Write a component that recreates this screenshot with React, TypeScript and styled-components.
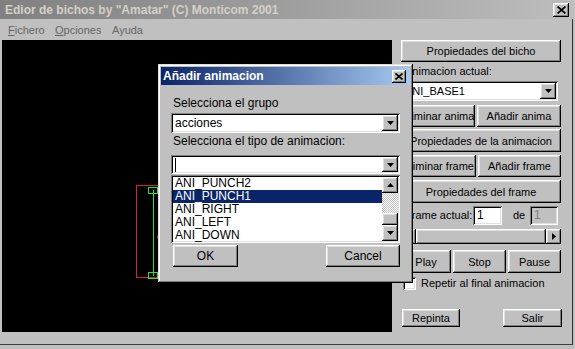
import styled, { createGlobalStyle } from "styled-components";

const GlobalStyle = createGlobalStyle`
  html, body {
    margin: 0;
    padding: 0;
    background: #c0c0c0;
  }
  body {
    width: 575px;
    height: 349px;
    overflow: hidden;
    font-family: "Liberation Sans", Arial, sans-serif;
    font-size: 11px;
    color: #000;
  }
`;

const raised = `
  box-shadow: inset -1px -1px #000, inset 1px 1px #fff,
    inset -2px -2px #808080, inset 2px 2px #dfdfdf;
`;

const sunken = `
  box-shadow: inset 1px 1px #808080, inset -1px -1px #fff,
    inset 2px 2px #000, inset -2px -2px #dfdfdf;
`;

const Screen = styled.div`
  position: relative;
  width: 575px;
  height: 349px;
  background: #c0c0c0;
  overflow: hidden;
`;

const Window = styled.div`
  width: 573px;
  display: flex;
  flex-direction: column;
`;

const TitleBar = styled.div<{ $active?: boolean }>`
  height: ${(p) => (p.$active ? 18 : 19)}px;
  display: flex;
  align-items: center;
  justify-content: space-between;
  padding: 0 4px 0 ${(p) => (p.$active ? 2 : 5)}px;
  background: ${(p) =>
    p.$active
      ? "linear-gradient(to right, #0a246a, #a6caf0)"
      : "linear-gradient(to right, #808080, #bdbdbd)"};
  color: ${(p) => (p.$active ? "#fff" : "#d4d0c8")};
  font-weight: bold;
  font-size: 12px;
  white-space: nowrap;
`;

const CloseBtn = styled.div<{ $w: number; $h: number }>`
  width: ${(p) => p.$w}px;
  height: ${(p) => p.$h}px;
  background: #c0c0c0;
  ${raised}
  display: flex;
  align-items: center;
  justify-content: center;
`;

const Frame = styled.div`
  border-right: 1px solid #303030;
  border-bottom: 1px solid #404040;
`;

const MenuBar = styled.div`
  height: 21px;
  display: flex;
  align-items: center;
  padding-left: 8px;
  color: #666;
`;

const MenuItem = styled.span<{ $w: number }>`
  width: ${(p) => p.$w}px;
  u {
    text-decoration: underline;
  }
`;

const Body = styled.div`
  display: flex;
  height: 292px;
`;

const Canvas = styled.div`
  margin-left: 2px;
  width: 390px;
  height: 292px;
  background: #000;
`;

const Panel = styled.div`
  width: 170px;
  padding-left: 9px;
  display: flex;
  flex-direction: column;
`;

const Footer = styled.div`
  height: 12px;
`;

const Button = styled.div<{ $w?: number; $h?: number; $mt?: number }>`
  width: ${(p) => (p.$w ? `${p.$w}px` : "auto")};
  height: ${(p) => p.$h ?? 22}px;
  margin-top: ${(p) => p.$mt ?? 0}px;
  background: #c0c0c0;
  ${raised}
  display: flex;
  align-items: center;
  justify-content: center;
  white-space: nowrap;
  overflow: hidden;
  flex-shrink: 0;
`;

const Row = styled.div<{ $mt: number; $h: number; $gap?: number }>`
  margin-top: ${(p) => p.$mt}px;
  height: ${(p) => p.$h}px;
  display: flex;
  align-items: center;
  gap: ${(p) => p.$gap ?? 2}px;
  flex-shrink: 0;
`;

const Label = styled.div<{ $h: number; $pl?: number; $mt?: number; $w?: number }>`
  height: ${(p) => p.$h}px;
  line-height: ${(p) => p.$h}px;
  padding-left: ${(p) => p.$pl ?? 0}px;
  margin-top: ${(p) => p.$mt ?? 0}px;
  ${(p) => (p.$w ? `width: ${p.$w}px;` : "")}
  white-space: nowrap;
  flex-shrink: 0;
`;

const Combo = styled.div<{ $w: number; $h: number; $mt?: number }>`
  width: ${(p) => p.$w}px;
  height: ${(p) => p.$h}px;
  margin-top: ${(p) => p.$mt ?? 0}px;
  background: #fff;
  ${sunken}
  display: flex;
  align-items: center;
  padding: 2px;
  box-sizing: border-box;
  flex-shrink: 0;
`;

const ComboText = styled.span`
  flex: 1;
  padding-left: 2px;
  white-space: nowrap;
`;

const Caret = styled.span`
  width: 1px;
  height: 14px;
  margin-left: 2px;
  background: #000;
`;

const ArrowBtn = styled.div<{ $w?: number; $h?: number }>`
  width: ${(p) => p.$w ?? 16}px;
  height: ${(p) => p.$h ?? 16}px;
  background: #c0c0c0;
  ${raised}
  display: flex;
  align-items: center;
  justify-content: center;
  flex-shrink: 0;
`;

const Field = styled.div<{ $w: number; $disabled?: boolean }>`
  width: ${(p) => p.$w}px;
  height: 19px;
  box-sizing: border-box;
  padding: 3px 4px;
  background: ${(p) => (p.$disabled ? "#c0c0c0" : "#fff")};
  color: ${(p) => (p.$disabled ? "#808080" : "#000")};
  ${sunken}
  font-size: 12px;
  line-height: 13px;
`;

const HScroll = styled.div`
  margin-top: 4px;
  width: 160px;
  height: 15px;
  display: flex;
  flex-shrink: 0;
`;

const Thumb = styled.div`
  flex: 1;
  background: #c0c0c0;
  ${raised}
`;

const CheckRow = styled.div`
  margin-top: 3px;
  height: 14px;
  display: flex;
  align-items: center;
  gap: 5px;
  padding-left: 2px;
`;

const CheckBox = styled.div`
  width: 13px;
  height: 13px;
  background: #fff;
  ${sunken}
`;

const BottomRow = styled.div`
  margin-top: 19px;
  width: 160px;
  height: 18px;
  display: flex;
  justify-content: space-between;
  padding-left: 1px;
`;

/* dialog */
const Dialog = styled.div`
  position: absolute;
  left: 158px;
  top: 64px;
  width: 255px;
  height: 219px;
  box-sizing: border-box;
  padding: 3px;
  background: #c0c0c0;
  box-shadow: inset -1px -1px #000, inset 1px 1px #dfdfdf,
    inset -2px -2px #808080, inset 2px 2px #fff;
  display: flex;
  flex-direction: column;
`;

const DialogBody = styled.div`
  padding: 0 10px;
  display: flex;
  flex-direction: column;
  font-size: 12px;
`;

const ListBox = styled.div`
  margin-top: 1px;
  height: 68px;
  box-sizing: border-box;
  padding: 2px;
  background: #fff;
  ${sunken}
  display: flex;
`;

const ListItems = styled.div`
  flex: 1;
  display: flex;
  flex-direction: column;
`;

const ListItem = styled.div<{ $sel?: boolean }>`
  height: 13px;
  line-height: 13px;
  padding-left: 2px;
  margin-right: -1px;
  background: ${(p) => (p.$sel ? "#0a246a" : "transparent")};
  color: ${(p) => (p.$sel ? "#fff" : "#000")};
  font-size: 12px;
`;

const VScroll = styled.div`
  width: 16px;
  display: flex;
  flex-direction: column;
`;

const Track = styled.div<{ $h: number }>`
  height: ${(p) => p.$h}px;
  background-image: repeating-conic-gradient(#c0c0c0 0 25%, #fff 0 50%);
  background-size: 2px 2px;
`;

const VThumb = styled.div`
  flex: 1;
  background: #c0c0c0;
  ${raised}
`;

const DialogButtons = styled.div`
  margin-top: 2px;
  height: 22px;
  display: flex;
  justify-content: space-between;
  padding-left: 2px;
`;

type Dir = "down" | "up" | "right" | "left";

const Tri = ({ dir }: { dir: Dir }) => {
  const horiz = dir === "right" || dir === "left";
  const w = horiz ? 4 : 7;
  const h = horiz ? 7 : 4;
  const pts = {
    down: "0,0 7,0 3.5,4",
    up: "0,4 7,4 3.5,0",
    right: "0,0 0,7 4,3.5",
    left: "4,0 4,7 0,3.5",
  }[dir];
  return (
    <svg width={w} height={h} viewBox={`0 0 ${w} ${h}`}>
      <polygon points={pts} fill="#000" />
    </svg>
  );
};

const XIcon = ({ s }: { s: number }) => (
  <svg width={s} height={s - 1} viewBox="0 0 8 7">
    <path d="M0.5 0.5 L7.5 6.5 M7.5 0.5 L0.5 6.5" stroke="#000" strokeWidth="1.6" />
  </svg>
);

// sprite bounding boxes drawn on the black editor area
const CanvasDrawing = () => (
  <svg width="390" height="292" viewBox="0 0 390 292">
    <rect x="134.5" y="145.5" width="40" height="92" fill="none" stroke="#d02828" strokeWidth="1" />
    <line x1="151.5" y1="150" x2="151.5" y2="236" stroke="#30e030" strokeWidth="1" />
    <rect x="146.5" y="147.5" width="9" height="6" fill="none" stroke="#30e030" />
    <rect x="146.5" y="232.5" width="9" height="6" fill="none" stroke="#30e030" />
    <line x1="156" y1="150.5" x2="162" y2="150.5" stroke="#30e030" />
    <line x1="156" y1="235.5" x2="162" y2="235.5" stroke="#30e030" />
    <ellipse cx="157" cy="197" rx="1.5" ry="3" fill="#777" />
  </svg>
);

export default function App() {
  return (
    <Screen>
      <GlobalStyle />
      <Window>
        <TitleBar>
          <span>Edior de bichos by "Amatar" (C) Monticom 2001</span>
          <CloseBtn $w={16} $h={14}>
            <XIcon s={9} />
          </CloseBtn>
        </TitleBar>
        <Frame>
          <MenuBar>
            <MenuItem $w={47}>
              <u>F</u>ichero
            </MenuItem>
            <MenuItem $w={57}>
              <u>O</u>pciones
            </MenuItem>
            <MenuItem $w={40}>Ayuda</MenuItem>
          </MenuBar>
          <Body>
            <Canvas>
              <CanvasDrawing />
            </Canvas>
            <Panel>
              <Button $w={160}>Propiedades del bicho</Button>
              <Label $h={19} $pl={4}>
                Animacion actual:
              </Label>
              <Combo $w={157} $h={20}>
                <ComboText>ANI_BASE1</ComboText>
                <ArrowBtn>
                  <Tri dir="down" />
                </ArrowBtn>
              </Combo>
              <Row $mt={4} $h={22}>
                <Button $w={74} $h={22}>
                  Eliminar anima
                </Button>
                <Button $w={84} $h={22}>
                  Añadir anima
                </Button>
              </Row>
              <Button $w={160} $h={23} $mt={2}>
                Propiedades de la animacion
              </Button>
              <Row $mt={3} $h={22}>
                <Button $w={75} $h={22}>
                  Eliminar frame
                </Button>
                <Button $w={83} $h={22}>
                  Añadir frame
                </Button>
              </Row>
              <Button $w={160} $h={23} $mt={3}>
                Propiedades del frame
              </Button>
              <Row $mt={3} $h={19} $gap={0}>
                <Label $h={19} $pl={4} $w={68}>
                  Frame actual:
                </Label>
                <Field $w={29}>1</Field>
                <Label $h={19} $pl={11} $w={17}>
                  de
                </Label>
                <Field $w={28} $disabled>
                  1
                </Field>
              </Row>
              <HScroll>
                <ArrowBtn $w={15} $h={15}>
                  <Tri dir="left" />
                </ArrowBtn>
                <Thumb />
                <ArrowBtn $w={15} $h={15}>
                  <Tri dir="right" />
                </ArrowBtn>
              </HScroll>
              <Row $mt={6} $h={23}>
                <Button $w={50} $h={23}>
                  Play
                </Button>
                <Button $w={53} $h={23}>
                  Stop
                </Button>
                <Button $w={53} $h={23}>
                  Pause
                </Button>
              </Row>
              <CheckRow>
                <CheckBox />
                <span>Repetir al final animacion</span>
              </CheckRow>
              <BottomRow>
                <Button $w={58} $h={18}>
                  Repinta
                </Button>
                <Button $w={59} $h={18}>
                  Salir
                </Button>
              </BottomRow>
            </Panel>
          </Body>
          <Footer />
        </Frame>
      </Window>

      <Dialog>
        <TitleBar $active>
          <span>Añadir animacion</span>
          <CloseBtn $w={14} $h={13}>
            <XIcon s={8} />
          </CloseBtn>
        </TitleBar>
        <DialogBody>
          <Label $h={16} $pl={2} $mt={10}>
            Selecciona el grupo
          </Label>
          <Combo $w={229} $h={20} $mt={2}>
            <ComboText>acciones</ComboText>
            <ArrowBtn>
              <Tri dir="down" />
            </ArrowBtn>
          </Combo>
          <Label $h={16} $pl={2}>
            Selecciona el tipo de animacion:
          </Label>
          <Combo $w={229} $h={19} $mt={6}>
            <Caret />
            <ComboText />
            <ArrowBtn $h={15}>
              <Tri dir="down" />
            </ArrowBtn>
          </Combo>
          <ListBox>
            <ListItems>
              <ListItem>ANI_PUNCH2</ListItem>
              <ListItem $sel>ANI_PUNCH1</ListItem>
              <ListItem>ANI_RIGHT</ListItem>
              <ListItem>ANI_LEFT</ListItem>
              <ListItem>ANI_DOWN</ListItem>
            </ListItems>
            <VScroll>
              <ArrowBtn>
                <Tri dir="up" />
              </ArrowBtn>
              <Track $h={20} />
              <VThumb />
              <ArrowBtn>
                <Tri dir="down" />
              </ArrowBtn>
            </VScroll>
          </ListBox>
          <DialogButtons>
            <Button $w={65} $h={22}>
              OK
            </Button>
            <Button $w={74} $h={22}>
              Cancel
            </Button>
          </DialogButtons>
        </DialogBody>
      </Dialog>
    </Screen>
  );
}
